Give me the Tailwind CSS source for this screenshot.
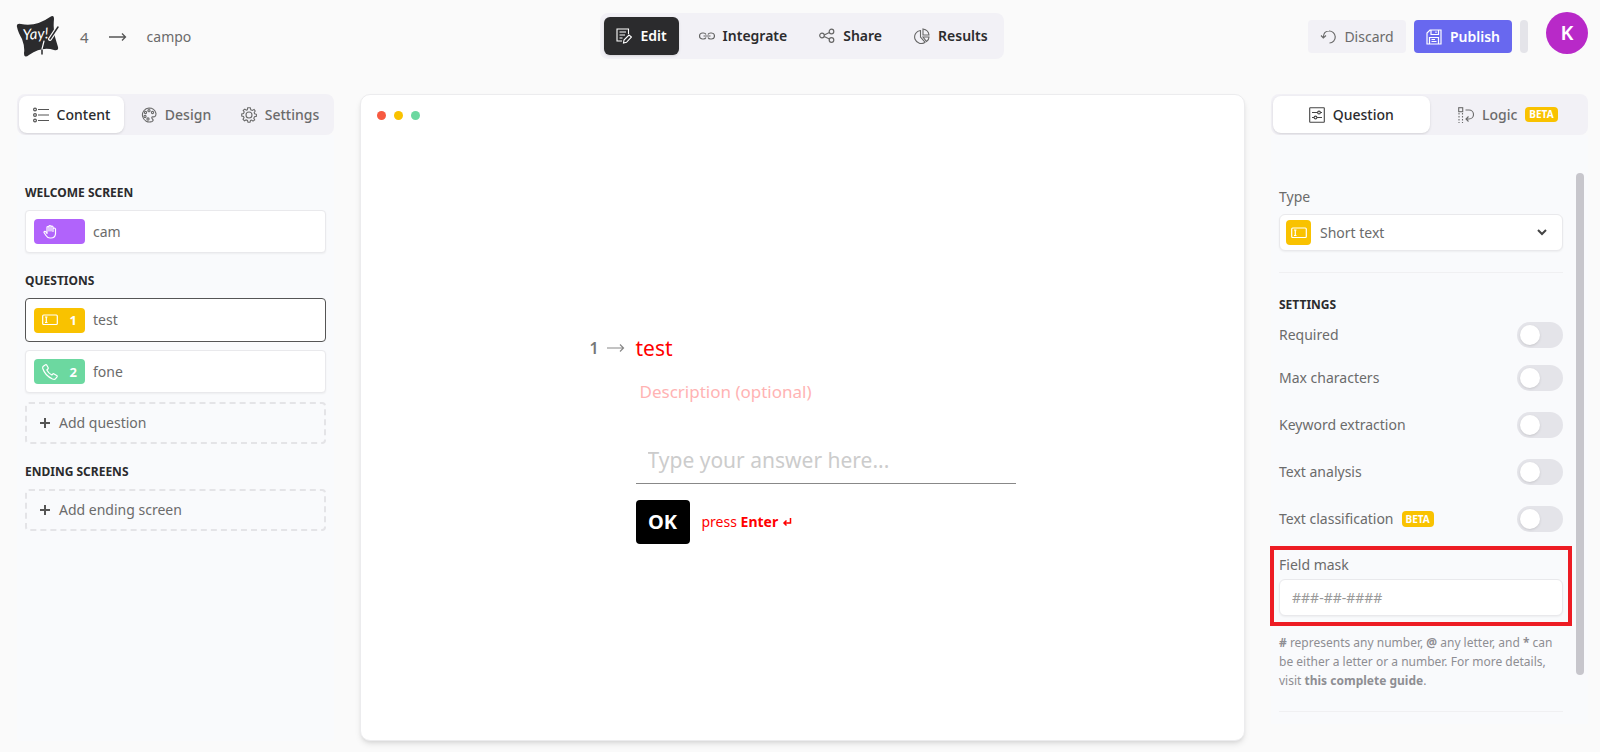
<!doctype html>
<html lang="en">
<head>
  <meta charset="UTF-8" />
  <meta name="viewport" content="width=device-width, initial-scale=1.0" />
  <title>campo - Form editor</title>
  <script src="https://cdn.jsdelivr.net/npm/@tailwindcss/browser@4"></script>
</head>
<body class="min-h-screen flex flex-col bg-[#fafafa] text-[#6b6b6b] font-['Noto_Sans',sans-serif] text-sm leading-5">

  <!-- Header -->
  <header class="grid grid-cols-[1fr_auto_1fr] h-[94px] pl-4 pr-3 pt-3 items-start">
    <div class="flex items-center h-[50px]">
      <a href="#" aria-label="Home">
        <svg class="w-11 h-11" viewBox="0 0 44 44">
          <path d="M1 12Q0 8 5 9Q20 12 34 2Q38-1 38 4Q37 14 39 22L42 32Q43 36 38 35Q26 31 13 40Q8 44 8 38Q9 32 6 24Q2 17 1 12Z" fill="#2b2b2d"/>
          <path d="M42 12L34 24" stroke="#fafafa" stroke-width="4" stroke-linecap="round"/>
          <path d="M42 12L34 24M26 35V39" stroke="#2b2b2d" stroke-width="1.500" stroke-linecap="round"/>
          <text x="7" y="25" transform="rotate(-4 7 25)" fill="#fff" font-family="Lato, sans-serif" font-style="italic" font-size="15">Yay!</text>
          <path d="M28 26L26 34" stroke="#fff" stroke-width="1.200" stroke-linecap="round"/>
        </svg>
      </a>
      <nav class="flex items-center ml-5 text-[15px]" aria-label="Breadcrumb">
        <a href="#">4</a>
        <svg class="w-[18px] h-3 mx-5" viewBox="0 0 18 12" fill="none" stroke="#555" stroke-width="1.300"><path d="M0 6H16.500M13 2.500L16.500 6L13 9.500"/></svg>
        <a href="#" class="text-sm">campo</a>
      </nav>
    </div>

    <nav class="flex h-[46px] mt-px p-1 rounded-lg bg-[#f2f1f6] text-[#2b2b2d] font-semibold">
      <a href="#" class="flex items-center gap-2 px-3 rounded-md bg-[#2b2b2d] text-white shadow">
        <svg class="size-4" viewBox="0 0 16 16" fill="none" stroke="currentColor" stroke-width="1.100"><path d="M12.500 6V1H1V13H6M3.500 4H10M3.500 7H9M3.500 10H6.500M7.500 15L8 12L13 7L15.500 9L10.500 14.300Z"/></svg>
        Edit
      </a>
      <a href="#" class="flex items-center gap-2 pl-5 pr-4">
        <svg class="size-4" viewBox="0 0 16 16" fill="none" stroke="#666" stroke-width="1.200"><path d="M7 9.500Q6.300 11 4.500 11H3.500A3 3 0 0 1 3.500 5H4.500Q6.300 5 7 6.500M9 6.500Q9.700 5 11.500 5H12.500A3 3 0 0 1 12.500 11H11.500Q9.700 11 9 9.500M4.500 8H11.500"/></svg>
        Integrate
      </a>
      <a href="#" class="flex items-center gap-2 px-4">
        <svg class="size-4" viewBox="0 0 16 16" fill="none" stroke="#666" stroke-width="1.200"><circle cx="3" cy="7.500" r="2.300"/><circle cx="12.500" cy="3.500" r="2.300"/><circle cx="12.500" cy="12" r="2.300"/><path d="M5.200 7L10.400 4.500M5.200 8.500L10.400 11"/></svg>
        Share
      </a>
      <a href="#" class="flex items-center gap-2 pl-4 pr-3">
        <svg class="size-4" viewBox="0 0 16 16" fill="none" stroke="#666" stroke-width="1.100"><path d="M6.500 2.500A6.500 6.500 0 1 0 11 14.200L6.500 9ZM9 1V7H15Q14.500 2 9 1ZM9 9H15Q15 12 12.500 13.500Z"/></svg>
        Results
      </a>
    </nav>

    <div class="flex justify-end">
      <button class="flex items-center justify-center gap-2 w-[98px] h-[33px] mt-2 rounded bg-[#f2f1f6]">
        <svg class="size-4" viewBox="0 0 16 16" fill="none" stroke="currentColor" stroke-width="1.200"><path d="M1 6.500L3.300 9L6 6.500M3.300 8.500Q3.500 2 9 2A6 6 0 0 1 9.500 14"/></svg>
        Discard
      </button>
      <button class="flex items-center justify-center gap-2 w-[98px] h-[33px] mt-2 ml-2 rounded bg-[#6868ef] text-white font-semibold">
        <svg class="size-4" viewBox="0 0 16 16" fill="none" stroke="currentColor" stroke-width="1.200"><path d="M4 1H15V15H1V4ZM5 1V5.500H12.500V1M10 2.500V4M3.500 15V8.500H12.500V15M5.500 10.500H9M5.500 12.500H10.500"/></svg>
        Publish
      </button>
      <div class="w-2 h-[33px] mt-2 ml-2 rounded-full bg-[#e4e4e9]"></div>
      <button class="size-[42px] ml-[18px] rounded-full bg-[#b829c8] text-white text-xl font-semibold">K</button>
    </div>
  </header>

  <main class="flex flex-1 pl-[17px] pr-3 pb-[11px]">

    <!-- Form outline -->
    <aside class="flex flex-col w-[317px] shrink-0">
      <div class="flex h-[41px] p-[2px] rounded-lg bg-[#f2f1f6] font-medium">
        <button class="flex items-center justify-center gap-2 w-[105px] rounded-lg bg-white text-[#2b2b2d] shadow">
          <svg class="size-4" viewBox="0 0 16 16" fill="none" stroke="#555" stroke-width="1.200"><circle cx="2" cy="2.500" r="1.400"/><circle cx="2" cy="8" r="1.400"/><circle cx="2" cy="13.500" r="1.400"/><path d="M5 2.500H16M5 8H16M5 13.500H16"/></svg>
          Content
        </button>
        <button class="flex items-center justify-center gap-2 flex-1">
          <svg class="size-4" viewBox="0 0 16 16" fill="none" stroke="currentColor" stroke-width="1.100"><path d="M15 6.500Q13.500 1 8 1A7 7 0 1 0 11 14.500Q13 13.500 11.500 12Q10 10.500 11.500 9.800Q15 10.500 15 6.500Z"/><circle cx="4" cy="9.500" r="1.100"/><circle cx="4.500" cy="5.500" r="1.100"/><circle cx="8" cy="3.700" r="1.100"/><circle cx="11.500" cy="5.500" r="1.100"/><circle cx="7" cy="12" r="1.100"/></svg>
          Design
        </button>
        <button class="flex items-center justify-center gap-2 flex-1">
          <svg class="size-4" viewBox="0 0 16 16" fill="none" stroke="currentColor" stroke-width="1.100"><circle cx="8" cy="8" r="3"/><path d="M6.700 .8H9.300L9.800 2.800L11.400 3.500L13.100 2.400L14.200 4L13.200 5.500L13.600 6.800L15.400 7.300V9.300L13.500 9.800L12.800 11.200L13.700 12.900L12 14.100L10.600 13.100L9.500 13.500L9 15.300H7L6.500 13.500L5.100 12.900L3.400 13.800L2 12.200L3 10.700L2.500 9.500L.7 9V7L2.500 6.500L3.200 5L2.200 3.400L3.800 2.100L5.300 3.200L6.300 2.800Z"/></svg>
          Settings
        </button>
      </div>

      <div class="flex-1 flex flex-col px-2 pt-12 bg-[#f9fafc]">
        <h2 class="text-xs leading-5 font-bold text-[#2b2b2d]">WELCOME SCREEN</h2>
        <a href="#" class="flex items-center gap-2 h-[43px] mt-[7px] px-2 rounded border border-[#e9e9ec] bg-white shadow-xs">
          <span class="flex items-center w-[51px] h-[25px] px-2 rounded bg-[#b163fb] text-white">
            <svg class="size-4" viewBox="0 0 16 16" fill="none" stroke="currentColor" stroke-width="1.200" stroke-linejoin="round"><path d="M5 9V3.500Q5 2.500 6 2.500T7 3.500V7V2.500Q7 1.500 8 1.500T9 2.500V7V3Q9 2 10 2T11 3V7.500V5Q11 4 12 4T13.500 5V10Q13 14 9 14H8Q5.500 14 4 11.500L2 8.500Q2 7 3.500 7.500L5 9.500Z"/></svg>
          </span>
          cam
        </a>

        <h2 class="mt-[18px] text-xs leading-5 font-bold text-[#2b2b2d]">QUESTIONS</h2>
        <a href="#" class="flex items-center gap-2 h-11 mt-[7px] px-2 rounded border border-[#555] bg-white">
          <span class="flex items-center justify-between w-[51px] h-[25px] px-2 rounded bg-[#f9c200] text-white text-[13px] font-bold">
            <svg class="size-4" viewBox="0 0 16 16" fill="none" stroke="currentColor" stroke-width="1.200"><rect x=".7" y="3" width="14.600" height="9.500" rx="1"/><path d="M3 5H5.500M3 10.500H5.500M4.300 5V10.500"/></svg>
            1
          </span>
          test
        </a>
        <a href="#" class="flex items-center gap-2 h-[43px] mt-2 px-2 rounded border border-[#e9e9ec] bg-white shadow-xs">
          <span class="flex items-center justify-between w-[51px] h-[25px] px-2 rounded bg-[#6cd8a0] text-white text-[13px] font-bold">
            <svg class="size-4" viewBox="0 0 16 16" fill="none" stroke="currentColor" stroke-width="1.200" stroke-linejoin="round"><path d="M1 2.500L3.500 .8Q4.300 .5 4.800 1.200L6.200 3.800Q6.400 4.500 5.800 5L4.800 6Q6.500 9.300 9.800 11L10.800 10Q11.400 9.500 12.100 9.900L14.700 11.400Q15.500 12 15 12.800L13.300 15Q12.500 15.700 10.500 15Q3 11.500 .8 4.500Q.5 3.300 1 2.500Z"/></svg>
            2
          </span>
          fone
        </a>
        <button class="flex items-center gap-2 h-[42px] mt-[9px] px-3 rounded border-2 border-dashed border-[#e4e4e7]">
          <svg class="size-3" viewBox="0 0 12 12" stroke="#555" stroke-width="2"><path d="M6 1V11M1 6H11"/></svg>
          Add question
        </button>

        <h2 class="mt-[18px] text-xs leading-5 font-bold text-[#2b2b2d]">ENDING SCREENS</h2>
        <button class="flex items-center gap-2 h-[42px] mt-[7px] px-3 rounded border-2 border-dashed border-[#e4e4e7]">
          <svg class="size-3" viewBox="0 0 12 12" stroke="#555" stroke-width="2"><path d="M6 1V11M1 6H11"/></svg>
          Add ending screen
        </button>
      </div>
    </aside>

    <!-- Preview -->
    <section class="flex-1 flex flex-col mx-[26px] rounded-[10px] border border-[#ececee] bg-white shadow-md">
      <div class="flex gap-2 px-4 pt-4">
        <span class="size-[9px] rounded-full bg-[#f75a41]"></span>
        <span class="size-[9px] rounded-full bg-[#f9c200]"></span>
        <span class="size-[9px] rounded-full bg-[#6cd8a0]"></span>
      </div>
      <div class="flex-1 flex items-center justify-center pt-4">
        <div class="grid grid-cols-[46px_380px] text-[#ff0000]">
          <div class="flex items-center gap-2 text-[#777] font-semibold text-base">
            1
            <svg class="w-[18px] h-3" viewBox="0 0 18 12" fill="none" stroke="#888" stroke-width="1.200"><path d="M0 6H16.500M13 2.500L16.500 6L13 9.500"/></svg>
          </div>
          <h1 class="text-[21px] leading-8">test</h1>
          <div class="col-start-2">
            <p class="mt-4 pl-1 text-[17px] leading-6 text-[#ffb3b3]">Description (optional)</p>
            <input type="text" aria-label="Answer" placeholder="Type your answer here..." class="block w-full h-11 mt-9 px-3 pb-1 border-b border-[#888] text-[21px] placeholder:text-[#cccccc] outline-none" />
            <div class="flex items-center mt-4">
              <button class="w-[54px] h-11 rounded bg-black text-white text-xl font-bold">OK</button>
              <span class="ml-3">press <b>Enter</b></span>
              <svg class="size-[10px] ml-1" viewBox="0 0 10 10" fill="none" stroke="currentColor" stroke-width="1.500"><path d="M8.500 1V6H2M4.500 3.500L2 6L4.500 8.500"/></svg>
            </div>
          </div>
        </div>
      </div>
    </section>

    <!-- Question settings -->
    <aside class="flex flex-col w-[317px] shrink-0">
      <div class="flex h-[41px] p-[2px] rounded-lg bg-[#f2f1f6] font-medium">
        <button class="flex items-center justify-center gap-2 flex-1 rounded-lg bg-white text-[#2b2b2d] shadow">
          <svg class="size-4" viewBox="0 0 16 16" fill="none" stroke="#444" stroke-width="1.100"><rect x=".7" y=".7" width="14.600" height="14.600" rx=".5"/><path d="M3 5.500H8.500M11.500 5.500H13M3 10.500H5M8 10.500H13"/><circle cx="10" cy="5.500" r="1.400"/><circle cx="6.500" cy="10.500" r="1.400"/></svg>
          Question
        </button>
        <button class="flex items-center justify-center gap-2 flex-1">
          <svg class="size-4" viewBox="0 0 16 16" fill="none" stroke="currentColor" stroke-width="1.100"><rect x=".7" y=".7" width="4" height="4"/><path d="M1 6V16M4.500 6V16" stroke-dasharray="1.500 1.500"/><path d="M7.500 3H11A4.500 4.500 0 0 1 11 12H8M10.500 9.500L8 12L10.500 14.500"/></svg>
          Logic
          <span class="px-1 rounded bg-[#f9c200] text-white text-[10px] leading-[15px] font-bold">BETA</span>
        </button>
      </div>

      <div class="flex justify-between pl-2 pr-1 pt-[38px] pb-3 bg-[#f9fafc]">
        <div class="w-[284px] pt-[14px]">
          <label for="type" class="block">Type</label>
          <div class="relative mt-[7px]">
            <select id="type" class="block w-full h-[37px] pl-10 rounded-md border border-[#e9e9ec] bg-white shadow-xs appearance-none">
              <option>Short text</option>
            </select>
            <span class="absolute left-[7px] top-[6px] flex items-center justify-center size-[25px] rounded bg-[#f9c200] text-white pointer-events-none">
              <svg class="size-4" viewBox="0 0 16 16" fill="none" stroke="currentColor" stroke-width="1.200"><rect x=".7" y="3" width="14.600" height="9.500" rx="1"/><path d="M3 5H5.500M3 10.500H5.500M4.300 5V10.500"/></svg>
            </span>
            <svg class="absolute right-4 top-[13px] size-[10px] pointer-events-none" viewBox="0 0 10 10" fill="none" stroke="#444" stroke-width="2"><path d="M1 3L5 7L9 3"/></svg>
          </div>
          <hr class="mt-[21px] border-[#f0f0f2]" />

          <h2 class="mt-[22px] text-xs leading-5 font-bold text-[#2b2b2d]">SETTINGS</h2>
          <div class="flex items-center justify-between mt-[7px]">
            <label for="required">Required</label>
            <input id="required" type="checkbox" role="switch" class="relative appearance-none w-[46px] h-[26px] rounded-full bg-[#e4e4e9] before:absolute before:left-[3px] before:top-[3px] before:size-5 before:rounded-full before:bg-white before:shadow" />
          </div>
          <div class="flex items-center justify-between mt-[17px]">
            <label for="max">Max characters</label>
            <input id="max" type="checkbox" role="switch" class="relative appearance-none w-[46px] h-[26px] rounded-full bg-[#e4e4e9] before:absolute before:left-[3px] before:top-[3px] before:size-5 before:rounded-full before:bg-white before:shadow" />
          </div>
          <div class="flex items-center justify-between mt-[21px]">
            <label for="keyword">Keyword extraction</label>
            <input id="keyword" type="checkbox" role="switch" class="relative appearance-none w-[46px] h-[26px] rounded-full bg-[#e4e4e9] before:absolute before:left-[3px] before:top-[3px] before:size-5 before:rounded-full before:bg-white before:shadow" />
          </div>
          <div class="flex items-center justify-between mt-[21px]">
            <label for="analysis">Text analysis</label>
            <input id="analysis" type="checkbox" role="switch" class="relative appearance-none w-[46px] h-[26px] rounded-full bg-[#e4e4e9] before:absolute before:left-[3px] before:top-[3px] before:size-5 before:rounded-full before:bg-white before:shadow" />
          </div>
          <div class="flex items-center justify-between mt-[21px]">
            <label for="classification" class="flex items-center gap-2">Text classification
              <span class="px-1 rounded bg-[#f9c200] text-white text-[10px] leading-4 font-bold">BETA</span>
            </label>
            <input id="classification" type="checkbox" role="switch" class="relative appearance-none w-[46px] h-[26px] rounded-full bg-[#e4e4e9] before:absolute before:left-[3px] before:top-[3px] before:size-5 before:rounded-full before:bg-white before:shadow" />
          </div>

          <div class="-mx-[9px] mt-[14px] px-[5px] pt-[5px] pb-[6px] border-4 border-[#ed1c24]">
            <label for="mask" class="block">Field mask</label>
            <input id="mask" type="text" placeholder="###-##-####" class="block w-full h-[37px] mt-1 px-3 rounded-md border border-[#e9e9ec] bg-white shadow-xs placeholder:text-[#999]" />
          </div>
          <p class="mt-[7px] text-xs leading-[19px] text-[#8e8e93]"><b>#</b> represents any number, <b>@</b> any letter, and <b>*</b> can be either a letter or a number. For more details, visit <a href="#" class="font-bold">this complete guide</a>.</p>
          <hr class="mt-[21px] border-[#f0f0f2]" />
        </div>
        <div class="w-2 h-[502px] rounded-full bg-[#c7c6cc]"></div>
      </div>
    </aside>
  </main>
</body>
</html>
